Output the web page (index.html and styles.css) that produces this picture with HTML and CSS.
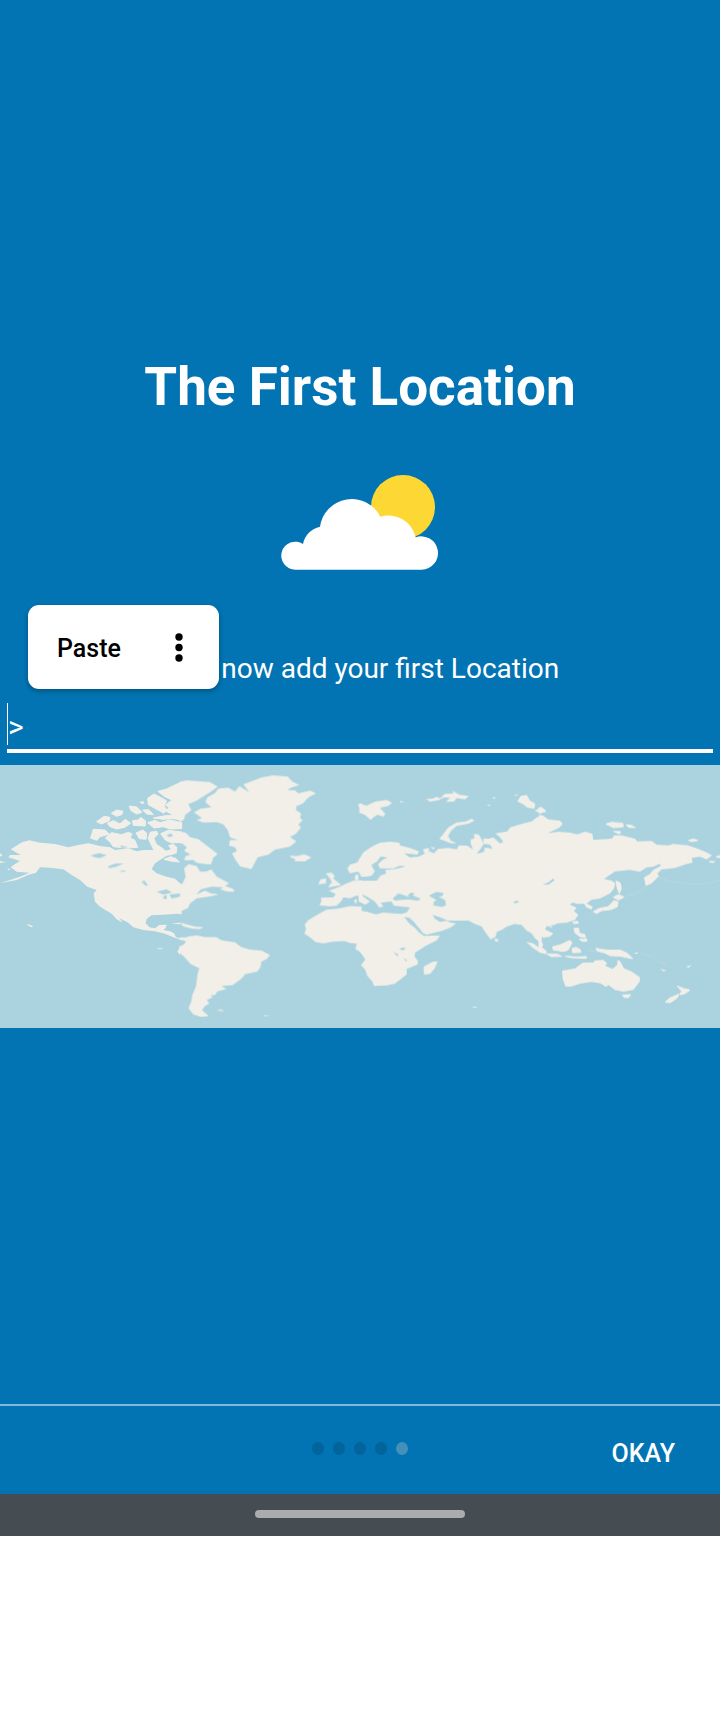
FILE: index.html
```html
<!DOCTYPE html>
<html lang="en">
<head>
<meta charset="utf-8">
<meta name="viewport" content="width=device-width, initial-scale=1">
<title>The First Location</title>
<link rel="stylesheet" href="styles.css">
</head>
<body>
<div class="screen">
  <main class="slide">
    <h1 class="title">The First Location</h1>
    <svg class="weather" viewBox="0 0 540 345" role="img" aria-label="Partly cloudy">
      <circle cx="399" cy="126" r="96" fill="#fdd835"/>
      <path fill="#fff" d="M76 314A42 42 0 1 1 99 237A66 66 0 0 1 150 185A96 96 0 0 1 331 155A84 84 0 0 1 437 217A50 50 0 1 1 455 314Z"/>
    </svg>
    <div class="entry">
      <label class="prompt" for="location">Lets now add your first Location</label>
      <div class="field">
        <input class="field-input" id="location" type="text" value="&gt;">
      </div>
      <div class="popup">
        <button class="paste" type="button">Paste</button>
        <button class="more" type="button" aria-label="More options">
          <svg class="more-icon" viewBox="0 0 8 29"><circle cx="4" cy="4" r="3.7"/><circle cx="4" cy="14.500" r="3.7"/><circle cx="4" cy="25" r="3.7"/></svg>
        </button>
      </div>
    </div>
    <svg class="map" viewBox="0 15 2160 789" role="img" aria-label="World map">
      <filter id="coast" x="0" y="0" width="1" height="1"><feGaussianBlur stdDeviation="2"/></filter>
      <g filter="url(#coast)">
      <!-- North America -->
      <g class="land">
        <path d="M66 247L88 241L120 248L165 252L205 262L235 255L265 250L300 258L330 262L345 270L385 265L410 274L430 270L460 270L450 250L443 235L450 215L470 212L476 222L463 235L470 252L485 262L497 272L512 268L504 256L520 252L532 262L530 280L515 285L500 287L480 300L465 310L455 327L470 340L500 350L525 356L545 374L545 463L530 461L490 464L455 466L440 476L437 490L448 502L465 505L478 495L500 494L497 504L490 510L510 514L522 520L528 532L545 536V540L520 532L495 521L465 514L430 510L400 502L385 488L355 473L325 455L300 440L285 425L281 400L290 390L262 380L240 360L215 345L190 328L150 323L120 322L108 338L85 345L50 360L0 370L60 350L88 338L50 335L32 322L45 312L60 303L25 292L30 285L62 285L32 268Z"/>
        <path d="M0 280L8 286L0 290ZM0 303L18 307L0 309ZM22 325L32 328L25 331ZM78 493L90 494L100 499L94 502ZM470 564L490 565L480 568ZM330 455L355 470L368 488L350 478ZM540 560V585L532 575ZM512 490L540 488V493Z"/>
        <path class="isles" d="M280 208L315 210L328 222L300 230L290 241L272 234ZM316 234L335 218L365 224L385 217L396 222L390 234L404 240L413 262L380 264L340 260L330 246ZM290 185L312 169L330 172L328 182L304 192ZM334 160L350 150L369 154L365 164L350 169ZM322 190L340 182L360 192L376 178L392 190L374 202L350 207L330 200ZM388 138L410 141L426 157L410 162L392 151ZM420 126L432 126L428 132ZM428 150L446 149L460 164L440 162ZM398 182L415 180L422 172L436 182L436 198L400 196ZM443 188L465 181L480 188L510 180L545 188V206L510 207L490 200L462 204ZM408 219L428 210L440 219L438 238L418 236ZM482 221L505 211L545 216V247L515 249L496 240ZM443 115L462 102L482 112L500 123L492 138L501 150L492 160L470 148L445 134ZM474 94L500 87L520 77L545 66V180L520 176L490 178L460 174L490 168L520 165L495 152L508 144L497 135L516 120L494 110ZM492 298L512 290L528 296L538 306L516 304Z"/>
      </g>
      <!-- Greenland, Quebec, South America, western Africa and Europe -->
      <g class="land" transform="translate(540)">
        <path d="M-2 66L20 61L60 64L90 66L113 80L94 94L75 106L50 122L25 132L34 150L15 165L12 178L-2 188Z"/>
        <path class="isles" d="M-2 217L18 220L30 233L55 239L76 255L98 272L111 282L98 293L92 312L70 310L48 306L40 298L15 300L17 290L35 284L14 272L22 262L8 250L-2 247Z"/>
        <path d="M-4 376L8 370L17 350L12 325L26 312L50 318L60 335L78 335L94 328L110 350L130 360L147 370L130 382L95 380L62 388L49 404L75 392L92 400L117 403L92 409L50 415L30 430L24 444L0 455L-4 465ZM120 388L136 378L158 386L164 395L142 395Z"/>
        <path d="M42 157L62 146L94 142L76 126L82 112L105 99L115 86L145 83L165 95L178 78L208 97L190 73L220 62L245 52L280 46L323 50L337 65L358 75L333 83L322 90L345 91L355 100L390 92L408 100L385 112L369 130L349 139L348 150L363 160L360 175L368 180L355 194L363 202L349 220L330 231L349 244L330 260L285 269L265 284L233 292L222 312L214 327L180 319L165 297L156 280L170 274L166 262L147 257L150 240L174 240L150 232L144 212L130 193L110 186L70 188L50 180L66 174Z"/>
        <path d="M330 287L350 288L373 283L394 292L375 304L344 304L346 297L333 293Z"/>
        <path d="M-2 487L20 493L45 500L70 501L60 507L35 506L10 499ZM0 532L15 533L28 529L50 526L75 531L108 531L125 541L165 547L185 562L210 569L245 572L270 585L260 597L244 605L242 620L232 635L196 642L185 655L158 675L124 678L140 687L112 694L105 705L92 705L98 712L80 720L88 731L74 738L66 750L86 768L64 771L40 763L25 744L34 725L37 705L48 678L53 640L58 625L32 612L12 590L-2 578V560L12 553L18 544L-2 538ZM110 752L122 748L134 753ZM250 765L268 767L255 769Z"/>
        <path d="M545 440L510 438L475 446L440 449L415 462L385 480L374 493L378 508L373 521L390 532L407 546L430 550L460 545L495 543L510 549L530 551L526 567L545 578ZM545 362L520 362L495 372L475 382L458 388L447 392L467 402L460 412L423 413L424 425L418 436L450 439L470 437L485 422L490 412L510 415L528 407L545 408ZM545 295L530 308L510 314L502 325L509 340L525 336L545 334ZM525 346L535 343V360L525 360ZM437 340L455 338L464 348L460 356L475 368L483 375L462 379L445 383L449 374L456 368L450 355ZM421 358L438 355L438 370L415 373ZM522 420L530 417V431L524 428ZM534 134L545 130V153Z"/>
      </g>
      <!-- Eurasia and Africa -->
      <g class="land" transform="translate(1080)">
        <path d="M-4 300L10 277L35 260L60 248L90 245L118 248L120 256L150 264L177 274L172 284L150 281L132 280L150 292L175 290L195 281L192 270L204 272L222 280L234 267L265 264L290 268L297 256L322 257L339 269L332 250L332 238L343 235L342 222L356 223L365 238L370 254L360 268L350 282L372 276L374 262L398 267L390 254L369 251L371 235L385 236L400 232L420 250L430 246L418 230L406 220L442 214L450 202L490 190L515 184L530 172L545 168V550L525 535L515 520L500 512L485 495L463 492L440 500L425 510L410 516L407 530L392 538L378 520L365 499L345 492L325 481L292 482L262 481L245 474L218 464L224 476L240 486L260 482L270 487L288 490L272 502L245 513L200 524L190 520L176 503L162 486L148 473L132 471L148 490L165 504L178 518L192 528L240 526L230 541L198 557L165 578L164 590L174 603L173 613L140 627L140 643L124 656L104 671L80 676L42 678L37 664L22 648L16 630L3 615L16 598L-4 570V452L20 455L48 463L70 457L100 460L125 462L140 457L150 442L102 437L94 424L62 428L70 440L58 442L44 424L25 412L5 402L10 410L30 424L15 434L-4 424V362L50 362L62 346L78 341L76 330L108 327L125 322L138 319L120 317L100 325L60 325L54 312L68 300L82 292L62 289L50 305L34 315L44 334L35 347L18 350L4 350L-4 335Z"/>
        <path d="M-2 130L20 137L45 125L80 120L96 128L85 138L60 143L76 162L70 170L52 164L40 172L32 180L14 164L-2 158ZM238 237L255 215L265 202L290 187L318 184L335 176L343 182L325 191L290 198L274 212L264 228L272 242L290 249L274 250ZM198 117L218 116L230 110L240 115L254 102L280 100L278 92L287 98L300 105L326 108L315 118L290 114L282 124L258 126L270 113L250 112L238 120L210 125ZM472 124L482 108L500 105L510 122L525 130L524 146L502 143L490 133ZM524 152L545 140V160ZM188 268L205 264L208 270L195 282ZM210 261L224 262L222 268ZM218 605L233 604L224 625L210 642L192 644L191 620ZM404 535L415 538L414 545L405 544ZM498 545L520 550L545 568V580L520 565ZM398 111L410 114L400 116ZM380 134L394 134L386 138ZM118 123L133 125L122 128ZM335 740L352 740L345 744ZM462 103L474 104L468 108Z"/>
      </g>
      <!-- East Asia and Oceania -->
      <g class="land" transform="translate(1620)">
        <path d="M-3 165L10 167L25 178L60 182L68 192L58 203L22 220L55 215L90 218L112 223L135 215L157 221L160 240L180 238L216 236L222 226L245 226L285 236L292 244L335 243L350 254L385 256L400 252L445 256L475 267L500 277L516 286L500 298L480 290L455 294L458 308L440 312L405 324L365 328L352 340L357 348L335 370L317 378L312 352L330 342L340 330L362 318L360 311L340 320L320 322L300 335L270 330L225 334L192 357L215 362L226 370L222 385L210 400L180 415L155 419L140 430L158 440L155 448L140 443L132 431L112 432L98 427L90 434L110 443L102 453L115 465L105 480L80 488L50 490L36 502L20 498L15 508L40 520L30 530L10 533L-3 525Z"/>
        <path class="isles" d="M-3 143L10 146L18 154L-3 159ZM198 192L215 187L248 190L250 200L220 203ZM258 194L275 196L286 203L266 202ZM221 214L242 215L238 222ZM446 241L460 237L474 241L455 245ZM529 290L545 285V295ZM508 304L524 305L516 308ZM228 363L240 368L244 385L238 400L232 385ZM220 412L235 404L252 411L236 420ZM222 422L234 425L232 440L215 448L185 452L170 460L160 455L178 445L205 440ZM98 486L112 484L116 489L102 491ZM102 505L116 505L118 520L134 523L136 532L120 530L105 518ZM118 538L140 536L140 544L125 543ZM38 560L60 555L90 541L96 548L84 570L70 574L40 570ZM96 566L108 562L122 570L122 577L98 578ZM-3 540L8 552L5 562L20 575L16 581L-3 574ZM20 582L50 582L65 589L35 590ZM75 588L105 591L140 590L138 595L95 593ZM168 565L185 568L210 571L240 570L262 580L278 596L258 592L240 588L210 587L195 579L172 573ZM247 705L272 704L265 713L252 712ZM412 678L422 682L432 686L450 690L434 701L420 704L425 693ZM418 702L410 715L390 728L376 726L390 714Z"/>
        <path d="M66 632L105 625L128 608L160 607L165 601L190 600L202 610L195 617L218 627L232 614L232 600L240 603L252 625L275 634L300 652L299 665L280 690L250 695L225 690L205 675L198 681L182 670L155 666L120 671L92 680L76 679L68 655ZM280 578L296 577L290 582ZM438 620L455 615L446 623ZM360 626L380 632L370 634Z"/>
        <path class="faint" d="M250 412L285 401L318 382M355 352L400 366L450 372L495 372L540 360M300 580L345 592M355 604L385 618M140 476L155 460M142 571L170 575"/>
      </g>
      <!-- Lakes, gulfs and inland seas -->
      <g class="water">
        <path d="M272 286L298 279L320 285L300 294L284 292ZM322 320L345 311L372 310L350 320L330 324ZM356 333L380 331L370 336ZM424 365L434 362L444 376L436 377ZM470 395L500 388L516 398L490 404ZM490 408L500 405L500 418L490 416ZM508 404L540 400L540 410L515 416ZM360 256L385 262L365 264ZM500 225L512 220L520 228L506 231Z"/>
        <path transform="translate(1080)" d="M98 415L115 400L130 405L145 411L145 404L155 397L164 400L158 406L182 416L175 422L145 418L120 420L105 422ZM207 406L230 396L250 399L248 408L236 410L255 420L258 436L245 441L220 436L222 424L230 420L215 412ZM460 426L470 422L478 426L466 430ZM118 567L130 562L137 565L128 571ZM100 574L115 584L112 589ZM132 594L140 600L137 605Z"/>
        <path transform="translate(1620)" d="M8 373L25 367L40 355L43 361L25 374ZM30 497L50 493L45 503Z"/>
      </g>
      </g>
    </svg>
  </main>
  <footer class="pager">
    <div class="dots">
      <span class="dot"></span><span class="dot"></span><span class="dot"></span><span class="dot"></span><span class="dot dot-current"></span>
    </div>
    <button class="okay" type="button">OKAY</button>
  </footer>
</div>
<div class="navbar"><div class="handle"></div></div>
</body>
</html>
```
FILE: styles.css
```css
* {
  box-sizing: border-box;
}

body {
  margin: 0;
  background: #fff;
  color: #fff;
  font-family: Roboto, "Liberation Sans", sans-serif;
}

button,
input {
  margin: 0;
  padding: 0;
  border: 0;
  border-radius: 0;
  background: none;
  color: inherit;
  font: inherit;
}

.screen {
  background: #0274b3;
}

.slide {
  display: flex;
  flex-direction: column;
  align-items: center;
  padding: 355px 0 376px;
}

.title {
  margin: 0;
  font-size: 53px;
  line-height: 64px;
  font-weight: 700;
}

.weather {
  width: 180px;
  height: 115px;
  margin-top: 46px;
}

.entry {
  position: relative;
  align-self: stretch;
  display: flex;
  flex-direction: column;
  padding: 72px 7px 12px;
}

.prompt {
  font-size: 28px;
  line-height: 34px;
  text-align: center;
}

.field {
  margin-top: 17px;
  padding-bottom: 4px;
  border-bottom: 4px solid #fff;
}

.field-input {
  display: block;
  width: 100%;
  height: 42px;
  padding-top: 4px;
  border-left: 1px solid #fff;
  font-size: 30px;
  outline: none;
}

.popup {
  position: absolute;
  left: 28px;
  top: 25px;
  display: flex;
  height: 84px;
  border-radius: 11px;
  background: #fff;
  color: #000;
  box-shadow: 0 2px 5px rgba(0, 0, 0, 0.3);
}

.paste {
  padding: 2px 0 0 29px;
  font-size: 25px;
  font-weight: 500;
}

.more {
  display: flex;
  align-items: center;
  justify-content: center;
  width: 80px;
  margin-left: 18px;
}

.more-icon {
  width: 8px;
  height: 29px;
}

.map {
  display: block;
  width: 100%;
  height: auto;
  background: #aad3df;
}

.land {
  fill: #f2efe9;
}

.isles {
  stroke: #f2efe9;
  stroke-width: 3;
}

.water {
  fill: #aad3df;
}

.faint {
  fill: none;
  stroke: #c2dadf;
  stroke-width: 2;
}

.pager {
  display: grid;
  grid-template-columns: 1fr auto 1fr;
  height: 90px;
  border-top: 2px solid #80b9d9;
}

.dots {
  grid-column: 2;
  display: flex;
  gap: 9px;
  padding-top: 36px;
}

.dot {
  width: 12px;
  height: 13px;
  border-radius: 50%;
  background: #02649b;
}

.dot-current {
  background: #468fb9;
}

.okay {
  justify-self: end;
  padding: 6px 45px 0 24px;
  font-size: 25px;
  font-weight: 500;
}

.navbar {
  display: flex;
  justify-content: center;
  height: 42px;
  padding-top: 16px;
  background: #454d52;
}

.handle {
  width: 210px;
  height: 8px;
  border-radius: 4px;
  background: #a9adaf;
}
```
